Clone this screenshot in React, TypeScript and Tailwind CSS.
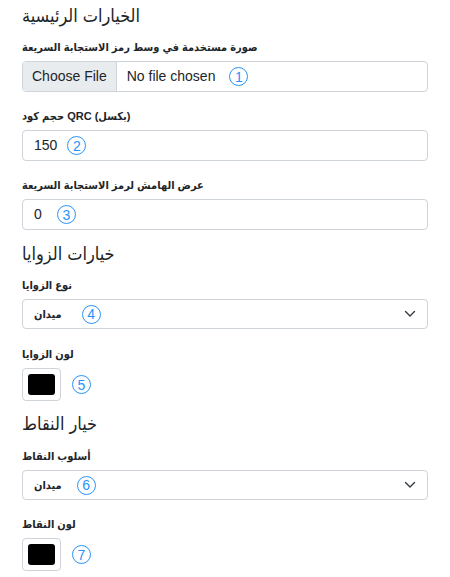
import React from "react";

const FONT = { fontFamily: '"Liberation Sans", "DejaVu Sans Condensed", "DejaVu Sans", Arial, sans-serif' };

function Num({ n, className = "" }: { n: number; className?: string }) {
  return (
    <span
      className={
        "inline-flex items-center justify-center w-[19px] h-[19px] rounded-full border-[1.5px] border-[#2a93f5] text-[#2a93f5] text-[14px] leading-none shrink-0 " +
        className
      }
    >
      {n}
    </span>
  );
}

function Label({ children, className = "" }: { children: React.ReactNode; className?: string }) {
  return (
    <div className={"h-5 leading-5 text-[11px] font-bold text-[#212529] mb-1 whitespace-nowrap " + className}>
      {children}
    </div>
  );
}

function Heading({ children, className = "" }: { children: React.ReactNode; className?: string }) {
  return <div className={"h-6 leading-6 text-[18px] text-[#212529] " + className}>{children}</div>;
}

function Chevron() {
  return (
    <svg width="12" height="8" viewBox="0 0 12 8" className="ml-auto mr-[11px]">
      <path d="M1.5 1.5 L6 6 L10.5 1.5" fill="none" stroke="#343a40" strokeWidth="1.4" strokeLinecap="round" strokeLinejoin="round" />
    </svg>
  );
}

function Select({ value, n, gap }: { value: string; n: number; gap: string }) {
  return (
    <div className="flex items-center h-[30px] border border-[#ced4da] rounded-[4px] bg-white pl-[11px]">
      <span className="text-[11px] font-bold text-[#212529]">{value}</span>
      <Num n={n} className={gap} />
      <Chevron />
    </div>
  );
}

function ColorBox({ n }: { n: number }) {
  return (
    <div className="flex items-center">
      <div className="w-[39px] h-[33px] border border-[#ced4da] rounded-[4px] bg-white flex items-center justify-center">
        <div className="w-[27px] h-[21px] bg-black rounded-[3px]" />
      </div>
      <Num n={n} className="ml-[11px]" />
    </div>
  );
}

export default function App() {
  return (
    <div className="w-[450px] h-[577px] bg-white px-[22px] pt-[4px] overflow-hidden" style={FONT}>
      <Heading>الخيارات الرئيسية</Heading>

      <Label className="mt-[9px]">صورة مستخدمة في وسط رمز الاستجابة السريعة</Label>
      <div className="flex items-center h-[31px] border border-[#ced4da] rounded-[4px] bg-white overflow-hidden text-[14px] text-[#212529] whitespace-nowrap">
        <div className="h-full bg-[#e9ecef] border-r border-[#ced4da] flex items-center px-[9px]">Choose File</div>
        <span className="ml-[10px]">No file chosen</span>
        <Num n={1} className="ml-[14px]" />
      </div>

      <Label className="mt-[14px]">حجم كود QRC (بكسل)</Label>
      <div className="flex items-center h-[31px] border border-[#ced4da] rounded-[4px] bg-white pl-[11px] text-[14px] text-[#212529]">
        <span>150</span>
        <Num n={2} className="ml-[10px]" />
      </div>

      <Label className="mt-[14px]">عرض الهامش لرمز الاستجابة السريعة</Label>
      <div className="flex items-center h-[31px] border border-[#ced4da] rounded-[4px] bg-white pl-[11px] text-[14px] text-[#212529]">
        <span>0</span>
        <Num n={3} className="ml-[15px]" />
      </div>

      <Heading className="mt-[12px]">خيارات الزوايا</Heading>

      <Label className="mt-[9px]">نوع الزوايا</Label>
      <Select value="ميدان" n={4} gap="ml-[20px]" />

      <Label className="mt-[15px]">لون الزوايا</Label>
      <ColorBox n={5} />

      <Heading className="mt-[11px]">خيار النقاط</Heading>

      <Label className="mt-[10px]">أسلوب النقاط</Label>
      <Select value="ميدان" n={6} gap="ml-[15px]" />

      <Label className="mt-[14px]">لون النقاط</Label>
      <ColorBox n={7} />
    </div>
  );
}
